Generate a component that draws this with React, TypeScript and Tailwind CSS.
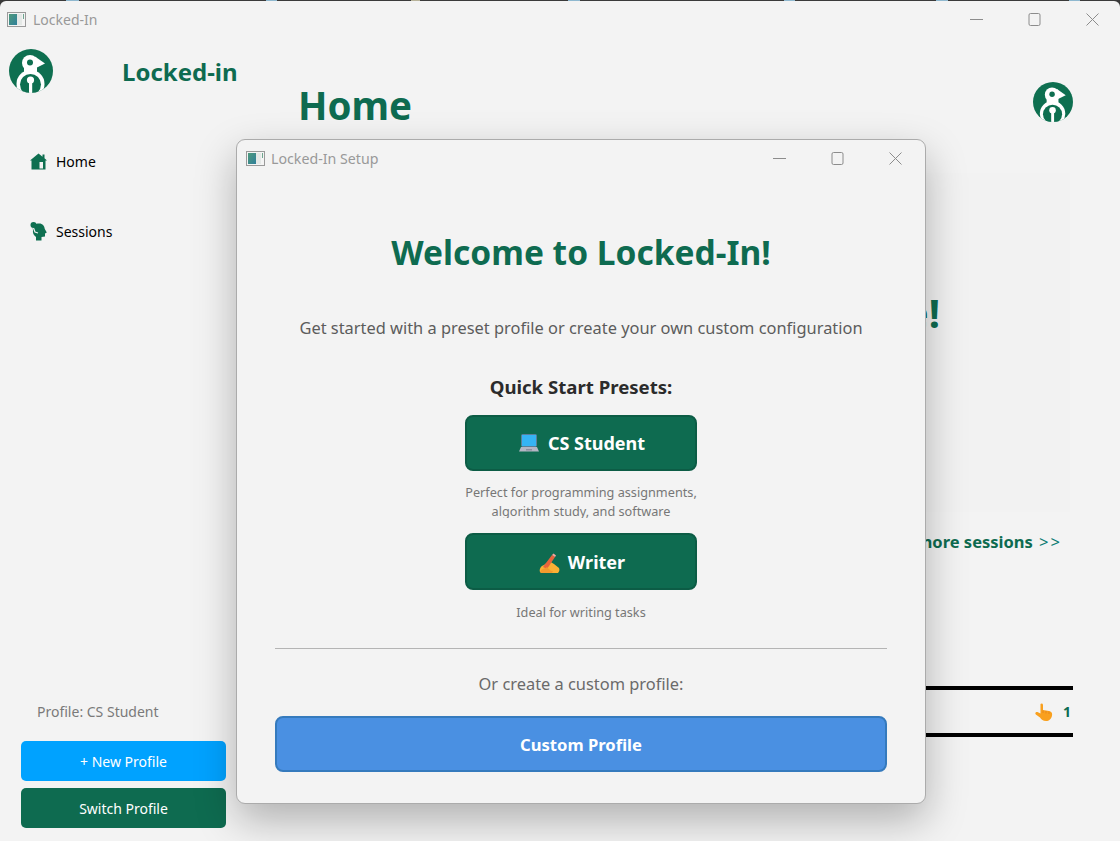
function AppIcon({ className }: { className?: string }) {
  return (
    <svg viewBox="0 0 19 15" className={className}>
      <defs>
        <linearGradient id="tile" x1="0" y1="0" x2="1" y2="1">
          <stop offset="0" stopColor="#4f9a7c" />
          <stop offset="1" stopColor="#2f7f9a" />
        </linearGradient>
      </defs>
      <rect x="0.5" y="0.5" width="18" height="14" fill="#f4f4f4" stroke="#9a9a9a" />
      <rect x="2" y="2" width="8" height="11" fill="url(#tile)" />
      <rect x="10" y="2" width="5" height="11" fill="#e4e8e6" />
      <rect x="16" y="2" width="1" height="5" fill="#6fa58f" />
    </svg>
  );
}

function WindowControls({ gaps }: { gaps: string }) {
  return (
    <div className={`flex items-center ${gaps}`}>
      <svg viewBox="0 0 13 13" className="w-[13px] h-[13px]" fill="none" stroke="#8c8c8c">
        <path d="M0 6.5H13" />
      </svg>
      <svg viewBox="0 0 13 13" className="w-[13px] h-[13px]" fill="none" stroke="#8c8c8c">
        <rect x="1" y="0.5" width="11" height="12" rx="1.5" />
      </svg>
      <svg viewBox="0 0 13 13" className="w-[13px] h-[13px]" fill="none" stroke="#8c8c8c">
        <path d="M0.5 0.5L12.5 12.5M12.5 0.5L0.5 12.5" />
      </svg>
    </div>
  );
}

function Logo({ className }: { className?: string }) {
  return (
    <svg viewBox="0 0 44 44" className={className}>
      <defs>
        <clipPath id="disc">
          <circle cx="22" cy="22" r="22" />
        </clipPath>
      </defs>
      <circle cx="22" cy="22" r="22" fill="#0e6f50" />
      <g clipPath="url(#disc)">
        <circle cx="21.5" cy="35" r="14" fill="#fff" />
        <circle cx="21" cy="14" r="8" fill="#fff" />
        <path d="M26 7.5L36 14.5L27 19Z" fill="#fff" />
        <rect x="15" y="18" width="13" height="6" fill="#fff" />
        <circle cx="21.5" cy="35.5" r="10.5" fill="#0e6f50" />
        <circle cx="21" cy="13.5" r="3" fill="#0e6f50" />
        <circle cx="21.5" cy="31" r="3.6" fill="#fff" />
        <rect x="20" y="31" width="3.2" height="13" fill="#fff" />
      </g>
    </svg>
  );
}

function HomeIcon() {
  return (
    <svg viewBox="0 0 17 17" className="w-[17px] h-[17px]">
      <path fill="#0e6f50" fillRule="evenodd" d="M8.5 0.5L12.5 3.7V1.5H14.5V5.3L17 7.5H15.5V16.5H1.5V7.5H0ZM9.5 9V15.5H13V9Z" />
    </svg>
  );
}

function SessionsIcon() {
  return (
    <svg viewBox="0 0 17 19" className="w-[17px] h-[19px]">
      <path fill="#0e6f50" d="M3 8C2 4 5 1 8.5 1.5C12 1 14.5 3.5 14.8 7L16.8 10.5L15 11.5V14.5L11.5 15V18.5H6V15C3.5 13 2.5 11 3 8Z" />
      <circle cx="3.5" cy="3" r="3" fill="#0e6f50" />
      <path d="M3.5 6L5 10L8 11" fill="none" stroke="#f3f3f3" strokeWidth="1.2" />
    </svg>
  );
}

function LaptopEmoji() {
  return (
    <svg viewBox="0 0 20 18" className="w-[20px] h-[18px]">
      <rect x="2.5" y="0.5" width="15" height="12" rx="1" fill="#35b4f4" stroke="#5c7f99" />
      <path d="M2 13H18L20 17.5H0Z" fill="#b4b6c4" />
      <rect x="7" y="15" width="6" height="1.5" fill="#8d8fa0" />
    </svg>
  );
}

function WritingHandEmoji() {
  return (
    <svg viewBox="0 0 21 20" className="w-[21px] h-[20px]">
      <path d="M1 19C0 16 2 13 5 12L10 8L15 11L20 15C21 17 20 19 19 20H3Z" fill="#fbb034" />
      <path d="M4 14L13 2L16 4L8 16Z" fill="#e8643c" />
      <path d="M13 2L14.5 0.5L17 2.5L16 4Z" fill="#f6a5a0" />
      <path d="M1 19C3 15 6 16 8 14C10 16 11 18 14 18L13 20H2Z" fill="#f29a2e" />
    </svg>
  );
}

function PointingEmoji() {
  return (
    <svg viewBox="0 0 18 18" className="w-[18px] h-[18px]">
      <path d="M5.5 1C6.5 0 8 0.5 8 2V7L14 8C16.5 8.5 17.5 10 17 12.5C16.5 16 14 18 11 18C8 18 6.5 16.5 5 14.5L0.8 11.5C-0.5 10 1 8.5 2.5 9L5.5 10.5Z" fill="#f9a01e" />
      <path d="M8 7.5V10M11 8V10.5M14 8.5V11" stroke="#e5831a" strokeWidth="0.8" fill="none" />
    </svg>
  );
}

export default function App() {
  return (
    <div className="relative w-[1120px] h-[841px] overflow-hidden bg-[#f3f3f3] font-['Noto_Sans',sans-serif] flex flex-col">
      {/* sliver of the desktop behind the window */}
      <div className="bg-[#3a3a3a] shrink-0">
        <div className="h-px flex">
          <span className="ml-[66px] w-[13px] bg-[#8fb8cf]" />
          <span className="ml-[187px] w-[11px] bg-[#8fb8cf]" />
          <span className="ml-[134px] w-[9px] bg-[#b8b39a]" />
          <span className="ml-[148px] w-[12px] bg-[#8fb8cf]" />
          <span className="ml-[204px] w-[11px] bg-[#8fb8cf]" />
          <span className="ml-[141px] w-[12px] bg-[#8fb8cf]" />
          <span className="ml-[121px] w-[11px] bg-[#8fb8cf]" />
        </div>
        <div className="h-[37px] rounded-t-[6px] bg-[#f3f3f3] flex items-center justify-between pl-[7px] pr-[21px]">
          <div className="flex items-center gap-[7px]">
            <AppIcon className="w-[19px] h-[15px]" />
            <span className="text-[14px] text-[#999999]">Locked-In</span>
          </div>
          <WindowControls gaps="gap-[45px]" />
        </div>
      </div>

      <div className="flex-1 flex min-h-0">
        <aside className="w-[236px] shrink-0 flex flex-col">
          <div className="flex items-start pl-[9px] pt-[11px]">
            <Logo className="w-[44px] h-[44px] shrink-0" />
            <span className="ml-[69px] mt-[5px] text-[24px] leading-[36px] font-bold text-[#0e6b50] whitespace-nowrap">Locked-in</span>
          </div>
          <nav className="mt-[58px] pl-[30px] flex flex-col gap-[50px]">
            <a className="h-[20px] flex items-center gap-[9px] text-[14px] text-black">
              <HomeIcon /> Home
            </a>
            <a className="h-[20px] flex items-center gap-[9px] text-[14px] text-black">
              <SessionsIcon /> Sessions
            </a>
          </nav>
          <div className="mt-auto pl-[21px] pb-[13px]">
            <p className="pl-4 text-[14px] text-[#7a7a7a] mb-[19px]">Profile: CS Student</p>
            <button className="w-[205px] h-[40px] block rounded-[5px] bg-[#00a2ff] text-[14px] text-white">+ New Profile</button>
            <button className="w-[205px] h-[40px] block mt-[7px] rounded-[5px] bg-[#0e6b50] text-[14px] text-white">Switch Profile</button>
          </div>
        </aside>

        <main className="flex-1 pl-[62px] pr-[47px] min-w-0">
          <div className="flex justify-between items-start">
            <h1 className="mt-[37px] text-[38.5px] leading-[60px] font-bold text-[#0e6b50]">Home</h1>
            <Logo className="w-[40px] h-[40px] mt-[44px] shrink-0" />
          </div>
          <div className="mt-[38px] ml-[-40px] mr-[3px] h-[339px] bg-[#f2f2f2] pt-[115px] pr-[130px] text-right text-[40px] leading-[50px] font-bold text-[#0e6b50]">
            Welcome!
          </div>
          <p className="mt-[18px] pr-[11px] text-right text-[16.5px] font-bold text-[#0e6b50]">
            View more sessions <span className="ml-[2px] font-normal tracking-[2px] text-[#0d7d73]">&gt;&gt;</span>
          </p>
          <div className="mt-[131px] pt-px border-y-4 border-black h-[51px] flex items-center justify-end gap-[10px] pr-[2px]">
            <PointingEmoji />
            <span className="text-[14px] font-bold text-[#0e6b50]">1</span>
          </div>
        </main>
      </div>

      <div className="absolute left-[236px] top-[139px] w-[690px] h-[665px] rounded-[9px] border border-[#ababab] bg-[#f3f3f3] shadow-[0_16px_40px_rgba(0,0,0,0.28)] flex flex-col">
        <div className="h-[37px] shrink-0 flex items-center justify-between pl-[9px] pr-[23px]">
          <div className="flex items-center gap-[6px]">
            <AppIcon className="w-[19px] h-[15px]" />
            <span className="text-[14.2px] text-[#999999]">Locked-In Setup</span>
          </div>
          <WindowControls gaps="gap-[45px]" />
        </div>

        <div className="flex-1 px-[38px] flex flex-col items-center">
          <h2 className="mt-[50px] h-[50px] text-[33.5px] leading-[50px] font-bold text-[#0e6b50] whitespace-nowrap">Welcome to Locked-In!</h2>
          <p className="mt-[37px] h-[28px] text-[16.4px] leading-[28px] text-[#5c5c5c] whitespace-nowrap">Get started with a preset profile or create your own custom configuration</p>
          <h3 className="mt-[31px] h-[28px] text-[18.6px] leading-[28px] font-bold text-[#2b2b2b]">Quick Start Presets:</h3>
          <button className="mt-[14px] pl-[2px] w-[232px] h-[56px] shrink-0 rounded-[8px] border-2 border-[#0c5c45] bg-[#0e6b50] text-[18px] font-bold text-white flex items-center justify-center gap-[9px]">
            <LaptopEmoji /> CS Student
          </button>
          <p className="mt-[12px] w-[240px] h-[35px] overflow-hidden text-center text-[12.7px] leading-[19px] text-[#777777]">
            Perfect for programming assignments, algorithm study, and software
          </p>
          <button className="mt-[15px] pl-[2px] pt-[2px] w-[232px] h-[57px] shrink-0 rounded-[8px] border-2 border-[#0c5c45] bg-[#0e6b50] text-[18px] font-bold text-white flex items-center justify-center gap-[8px]">
            <WritingHandEmoji /> Writer
          </button>
          <p className="mt-[13px] h-[19px] text-center text-[12.7px] leading-[19px] text-[#777777]">Ideal for writing tasks</p>
          <div className="mt-[26px] w-full h-px bg-[#b4b4b4] shrink-0" />
          <p className="mt-[22px] h-[26px] text-[16.4px] leading-[26px] text-[#6a6a6a]">Or create a custom profile:</p>
          <button className="mt-[19px] pt-[2px] w-full h-[56px] shrink-0 rounded-[8px] border-2 border-[#357abd] bg-[#4a90e2] text-[16.6px] font-bold text-white">Custom Profile</button>
        </div>
      </div>
    </div>
  );
}
